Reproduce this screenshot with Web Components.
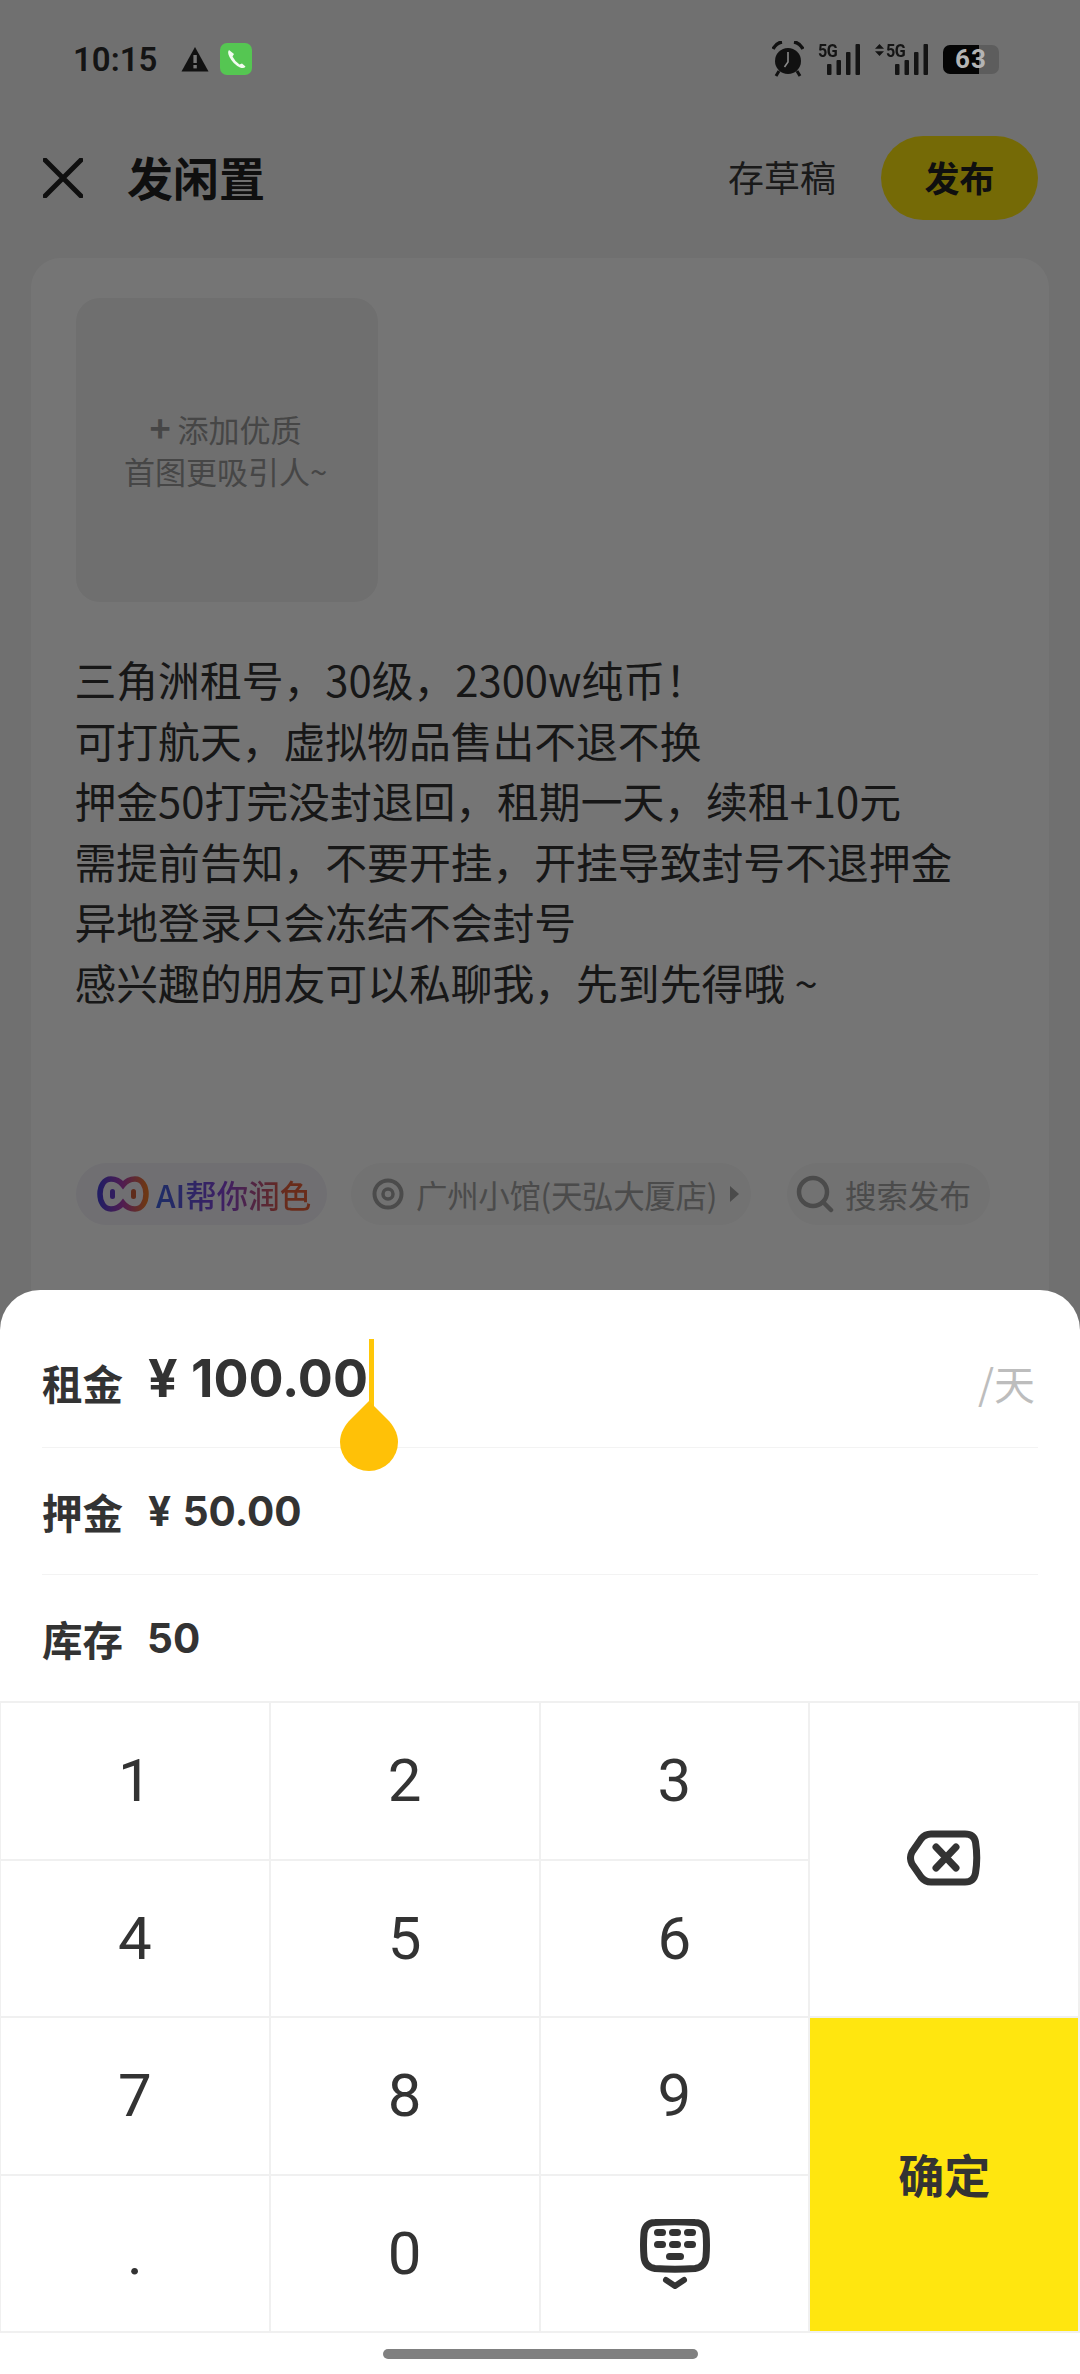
<!DOCTYPE html>
<html lang="zh">
<head>
<meta charset="utf-8">
<title>发闲置</title>
<style>
  html, body { margin: 0; height: 2374px; overflow: hidden; }
  body {
    position: relative;
    display: flex;
    flex-direction: column;
    background: #f5f5f5;
    font-family: "Noto Sans CJK SC", "Noto Sans", sans-serif;
  }
</style>
</head>
<body>
  <status-bar></status-bar>
  <nav-bar></nav-bar>
  <post-card>三角洲租号，30级，2300w纯币！
可打航天，虚拟物品售出不退不换
押金50打完没封退回，租期一天，续租+10元
需提前告知，不要开挂，开挂导致封号不退押金
异地登录只会冻结不会封号
感兴趣的朋友可以私聊我，先到先得哦 ~</post-card>
  <dim-layer></dim-layer>
  <price-sheet></price-sheet>

<script>
const CJK = `"Noto Sans CJK SC", sans-serif`;

class StatusBar extends HTMLElement {
  constructor() {
    super();
    this.attachShadow({ mode: "open" });
    const bars = `<rect x="0" y="20" width="4.5" height="11" rx="1"/><rect x="9.5" y="16" width="4.5" height="15" rx="1"/><rect x="19" y="8" width="4.5" height="23" rx="1"/><rect x="28.5" y="0" width="4.5" height="31" rx="1"/>`;
    this.shadowRoot.innerHTML = `
      <style>
        :host { display: flex; align-items: center; height: 118px; padding: 0 80px 0 73px; box-sizing: border-box; position: relative; z-index: 2; color: #141414; font-family: Roboto, sans-serif; }
        .time { font-size: 33px; font-weight: 600; margin-right: 24px; }
        .warn { margin-right: 11px; }
        .spacer { flex: 1; }
        .right { display: flex; align-items: center; }
        .sig { position: relative; width: 42px; height: 31px; }
        .sig svg { position: absolute; right: 0; bottom: 0; fill: #141414; }
        .sig b { position: absolute; left: 0; top: -2px; font-size: 19px; line-height: 17px; font-weight: 700; letter-spacing: -.5px; transform: scaleX(.85); transform-origin: left; }
        .arrows { margin: 0 2px 18px 15px; }
        .batt { margin-left: 15px; position: relative; display: flex; width: 57px; height: 29px; }
        .batt i { display: block; width: 36px; background: #050505; border-radius: 7px 0 0 7px; }
        .batt u { display: block; width: 20px; background: #5d5d5d; border-radius: 0 7px 7px 0; }
        .batt span { position: absolute; left: 12px; top: -1px; font-size: 26px; line-height: 31px; font-weight: 700; letter-spacing: 1px; color: #b4b4b4; }
      </style>
      <span class="time">10:15</span>
      <svg class="warn" width="28" height="26" viewBox="0 0 28 26"><path d="M14 1 L27.5 25.5 H.5Z" fill="#111"/><rect x="12.4" y="9" width="3.4" height="8" fill="#777"/><rect x="12.4" y="19" width="3.4" height="3.4" fill="#777"/></svg>
      <svg width="32" height="32" viewBox="0 0 32 32"><rect width="32" height="32" rx="7" fill="#55c652"/><path d="M9 7 Q7 9 9.5 14 Q13 21 20 24.5 Q24 26 25.5 23.5 L22 20.5 L19.5 21.5 Q15 18.5 12.5 13.5 L14 11 Z" fill="#f2fbf0"/></svg>
      <span class="spacer"></span>
      <div class="right">
        <svg width="32" height="36" viewBox="0 0 32 36" style="margin-right:14px"><circle cx="16" cy="20" r="13" fill="#111"/><path d="M16 11 V21 L12.5 26" stroke="#8a8a8a" stroke-width="1.6" fill="none"/><path d="M1 8 Q4 2 10 1 M31 8 Q28 2 22 1" stroke="#111" stroke-width="3.5" fill="none"/><path d="M7 30 L4 35 M25 30 L28 35" stroke="#111" stroke-width="3"/></svg>
        <div class="sig"><b>5G</b><svg width="33" height="31" viewBox="0 0 33 31">${bars}</svg></div>
        <svg class="arrows" width="9" height="12" viewBox="0 0 9 12"><path d="M4.5 0 L9 4.8 H0Z M4.5 12 L9 7.2 H0Z" fill="#141414"/></svg>
        <div class="sig"><b>5G</b><svg width="33" height="31" viewBox="0 0 33 31">${bars}</svg></div>
        <div class="batt"><i></i><u></u><span>63</span></div>
      </div>`;
  }
}

class NavBar extends HTMLElement {
  constructor() {
    super();
    this.attachShadow({ mode: "open" });
    this.shadowRoot.innerHTML = `
      <style>
        :host { display: flex; align-items: center; height: 120px; padding: 0 42px 0 43px; font-family: ${CJK}; color: #222; }
        svg { margin-right: 44px; }
        h1 { margin: 0 0 4px; flex: 1; font-size: 46px; font-weight: 700; }
        .draft { font-size: 36px; color: #3a3a3a; margin: 0 45px 4px 0; }
        .pub { display: flex; align-items: center; justify-content: center; width: 157px; height: 84px; padding-bottom: 4px; box-sizing: border-box; border-radius: 42px; background: #ffe60f; font-size: 35px; font-weight: 700; }
      </style>
      <svg width="40" height="40" viewBox="0 0 40 40"><path d="M2 2 L38 38 M38 2 L2 38" stroke="#222" stroke-width="5" stroke-linecap="round"/></svg>
      <h1>发闲置</h1>
      <span class="draft">存草稿</span>
      <span class="pub">发布</span>`;
  }
}

class PhotoSlot extends HTMLElement {
  constructor() {
    super();
    this.attachShadow({ mode: "open" });
    this.shadowRoot.innerHTML = `
      <style>
        :host { display: flex; align-items: center; justify-content: center; width: 302px; height: 304px; padding-right: 3px; box-sizing: border-box; border-radius: 24px; background: #f1f1f1; color: #999; font-size: 31px; line-height: 42px; text-align: center; }
        b { font-weight: 700; font-size: 36px; line-height: 36px; }
      </style>
      <div><b>+</b> 添加优质<br>首图更吸引人~</div>`;
  }
}

class ChipRow extends HTMLElement {
  constructor() {
    super();
    this.attachShadow({ mode: "open" });
    this.shadowRoot.innerHTML = `
      <style>
        :host { display: flex; align-items: center; font-size: 31.5px; color: #a3a3a3; white-space: nowrap; }
        .chip { display: flex; align-items: center; height: 62px; border-radius: 31px; box-sizing: border-box; }
        .ai { width: 251px; padding-left: 21px; background: #f3f1f9; }
        .ai span { margin-left: 7px; font-weight: 500; background: linear-gradient(90deg, #3f63e0, #8a45d8 45%, #e5603a 85%); -webkit-background-clip: text; background-clip: text; color: transparent; }
        .loc { width: 400px; margin-left: 24px; padding-left: 21px; background: #f8f8f8; }
        .loc span { margin: 0 13px 0 12px; letter-spacing: -.35px; }
        .find { width: 203px; margin-left: 36px; padding-left: 9px; background: #f8f8f8; }
        .find span { margin-left: 11px; }
      </style>
      <div class="chip ai">
        <svg width="52" height="36" viewBox="0 0 52 36" fill="none">
          <defs><linearGradient id="g"><stop offset="0" stop-color="#4a3fd8"/><stop offset=".5" stop-color="#b13fb0"/><stop offset="1" stop-color="#ef7a2c"/></linearGradient></defs>
          <path d="M26 9 C22 4 17 3 14 3 C7 3 3 10 3 18 C3 26 7 33 14 33 C17 33 22 32 26 27 C30 32 35 33 38 33 C45 33 49 26 49 18 C49 10 45 3 38 3 C35 3 30 4 26 9 Z" stroke="url(#g)" stroke-width="5.5"/>
          <rect x="13" y="13" width="5" height="10" rx="2.5" fill="#6a3fd0"/><rect x="34" y="13" width="5" height="10" rx="2.5" fill="#d0603c"/>
        </svg>
        <span>AI帮你润色</span>
      </div>
      <div class="chip loc">
        <svg width="32" height="32" viewBox="0 0 32 32" fill="none"><circle cx="16" cy="16" r="13.5" stroke="#a3a3a3" stroke-width="4"/><circle cx="16" cy="16" r="5" stroke="#a3a3a3" stroke-width="3.5"/></svg>
        <span>广州小馆(天弘大厦店)</span>
        <svg width="9" height="16" viewBox="0 0 9 16"><path d="M0 0 L9 8 L0 16Z" fill="#a3a3a3"/></svg>
      </div>
      <div class="chip find">
        <svg width="38" height="38" viewBox="0 0 38 38" fill="none"><circle cx="17" cy="17" r="14" stroke="#a3a3a3" stroke-width="4.5"/><path d="M27 27 L35 35" stroke="#a3a3a3" stroke-width="4.5" stroke-linecap="round"/></svg>
        <span>搜索发布</span>
      </div>`;
  }
}

class PostCard extends HTMLElement {
  constructor() {
    super();
    this.attachShadow({ mode: "open" });
    this.shadowRoot.innerHTML = `
      <style>
        :host { display: block; flex: 1; margin: 20px 31px 0; padding: 40px 45px 40px 45px; border-radius: 30px 30px 0 0; background: #fff; font-family: ${CJK}; }
        .body { margin: 47px 0 150px -1.5px; height: 364px; font-size: 41.8px; line-height: 60.6px; color: #333; white-space: pre-line; }
      </style>
      <photo-slot></photo-slot>
      <div class="body"><slot></slot></div>
      <chip-row></chip-row>`;
  }
}

class DimLayer extends HTMLElement {
  constructor() {
    super();
    this.attachShadow({ mode: "open" });
    this.shadowRoot.innerHTML = `<style>:host { position: absolute; inset: 0; z-index: 1; background: rgba(0,0,0,.54); }</style>`;
  }
}

class PriceRow extends HTMLElement {
  constructor() {
    super();
    this.attachShadow({ mode: "open" });
    this.shadowRoot.innerHTML = `
      <style>
        :host { display: flex; align-items: center; height: 127px; margin: 0 42px; box-sizing: border-box; border-bottom: 1.5px solid #f3f3f3; color: #333; font-weight: 700; }
        :host([last]) { border-bottom: 0; height: 126px; }
        :host([big]) { height: 128px; }
        .label { font-family: ${CJK}; font-size: 40.5px; margin-right: 25px; }
        :host([big]) .label { padding-bottom: 3px; }
        .val { font-family: Inter, sans-serif; font-size: 40.5px; word-spacing: 2px; position: relative; }
        :host([last]) .val { margin-left: -1px; }
        :host([big]) .val { font-size: 52px; word-spacing: 1px; margin-bottom: 10px; }
        .unit { margin: 0 3px 3px auto; font-family: ${CJK}; font-size: 41px; font-weight: 400; color: #bdbdbd; }
      </style>
      <span class="label"></span>
      <span class="val"><slot></slot><slot name="caret"></slot></span>
      <span class="unit"></span>`;
    this.shadowRoot.querySelector(".label").innerText = this.getAttribute("label");
    this.shadowRoot.querySelector(".unit").innerText = this.getAttribute("unit") || "";
  }
}

class CaretHandle extends HTMLElement {
  constructor() {
    super();
    this.attachShadow({ mode: "open" });
    this.shadowRoot.innerHTML = `
      <style>:host { position: absolute; left: 100%; top: -8px; margin-left: -28px; width: 58px; height: 132px; }</style>
      <svg width="58" height="132" viewBox="0 0 58 132"><rect x="29" y="0" width="5" height="72" fill="#ffc708"/><path d="M29 62 L47 80 C53 86 58 94 58 103 A29 29 0 0 1 0 103 C0 94 5 86 11 80 Z" fill="#ffc107"/></svg>`;
  }
}

class NumKey extends HTMLElement {
  constructor() {
    super();
    this.attachShadow({ mode: "open" });
    this.shadowRoot.innerHTML = `
      <style>
        :host { display: flex; align-items: center; justify-content: center; background: #fff; color: #333; font-family: Roboto, sans-serif; font-size: 60px; }
        :host([confirm]) { background: #ffe60f; font-family: ${CJK}; font-size: 46px; font-weight: 700; padding-bottom: 4px; box-sizing: border-box; }
        :host([tall]) { grid-row: span 2; }
      </style>
      <slot></slot>`;
  }
}

class NumKeypad extends HTMLElement {
  constructor() {
    super();
    this.attachShadow({ mode: "open" });
    this.shadowRoot.innerHTML = `
      <style>
        :host { display: grid; grid-template-columns: repeat(4, 1fr); grid-template-rows: repeat(4, 1fr); gap: 2px; padding: 2px 2px 2px 1px; height: 632px; box-sizing: border-box; background: #f0f0f0; }
      </style>
      <num-key>1</num-key><num-key>2</num-key><num-key>3</num-key>
      <num-key tall>
        <svg width="74" height="56" viewBox="0 0 74 56" fill="none" stroke="#333" stroke-width="7" stroke-linecap="round" style="margin-bottom:4px">
          <path d="M24 4 H58 Q67 4 68.5 12 Q71 28 68.5 43 Q67 52 58 52 H24 Q18 52 14 47 L5 34 Q2 28 5 22 L14 9 Q18 4 24 4Z"/>
          <path d="M29 17 L49 38 M49 17 L29 38"/>
        </svg>
      </num-key>
      <num-key>4</num-key><num-key>5</num-key><num-key>6</num-key>
      <num-key>7</num-key><num-key>8</num-key><num-key>9</num-key>
      <num-key confirm tall>确定</num-key>
      <num-key>.</num-key><num-key>0</num-key>
      <num-key>
        <svg width="70" height="72" viewBox="0 0 70 72" fill="none" style="margin:4px 0 0 2px">
          <path d="M15 3.5 Q35 2 55 3.5 Q65 4 66 14 Q67 26 66 38 Q65 48 55 49.5 Q35 51 15 49.5 Q5 48 4 38 Q3 26 4 14 Q5 4 15 3.5Z" stroke="#333" stroke-width="7"/>
          <g fill="#333"><rect x="14" y="10" width="12" height="7" rx="3.5"/><rect x="29" y="10" width="12" height="7" rx="3.5"/><rect x="44" y="10" width="12" height="7" rx="3.5"/><rect x="14" y="22" width="12" height="7" rx="3.5"/><rect x="29" y="22" width="12" height="7" rx="3.5"/><rect x="44" y="22" width="12" height="7" rx="3.5"/><rect x="26" y="34" width="18" height="7" rx="3.5"/></g>
          <path d="M26 61 L35 67 L44 61" stroke="#333" stroke-width="6" stroke-linecap="round" stroke-linejoin="round"/>
        </svg>
      </num-key>`;
  }
}

class PriceSheet extends HTMLElement {
  constructor() {
    super();
    this.attachShadow({ mode: "open" });
    this.shadowRoot.innerHTML = `
      <style>
        :host { position: absolute; left: 0; right: 0; bottom: 0; z-index: 3; height: 1084px; padding-top: 30px; box-sizing: border-box; display: flex; flex-direction: column; background: #fff; border-radius: 40px 40px 0 0; }
        .home { flex: 1; display: flex; align-items: center; justify-content: center; }
        .home i { display: block; width: 315px; height: 10px; border-radius: 5px; background: #808080; }
      </style>
      <price-row big label="租金" unit="/天">¥ 100.00<caret-handle slot="caret"></caret-handle></price-row>
      <price-row label="押金">¥ 50.00</price-row>
      <price-row last label="库存">50</price-row>
      <num-keypad></num-keypad>
      <div class="home"><i></i></div>`;
  }
}

customElements.define("status-bar", StatusBar);
customElements.define("nav-bar", NavBar);
customElements.define("photo-slot", PhotoSlot);
customElements.define("chip-row", ChipRow);
customElements.define("post-card", PostCard);
customElements.define("dim-layer", DimLayer);
customElements.define("price-row", PriceRow);
customElements.define("caret-handle", CaretHandle);
customElements.define("num-key", NumKey);
customElements.define("num-keypad", NumKeypad);
customElements.define("price-sheet", PriceSheet);
</script>
</body>
</html>
